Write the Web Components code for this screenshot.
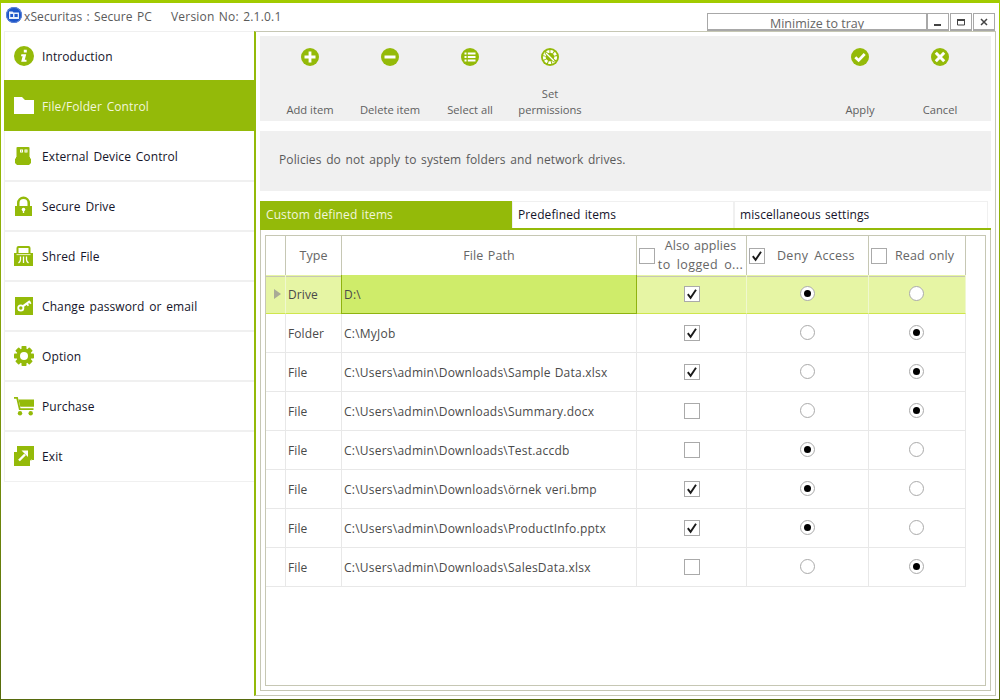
<!DOCTYPE html>
<html>
<head>
<meta charset="utf-8">
<title>xSecuritas</title>
<style>
  html, body { margin: 0; padding: 0; background: #fff; }
  body { font-family: "Open Sans", "Liberation Sans", sans-serif; font-size: 12px; }
</style>
</head>
<body>

<x-app>
  <x-titlebar slot="title" product="xSecuritas : Secure PC" version="Version No: 2.1.0.1"></x-titlebar>

  <x-nav slot="nav">
    <x-nav-item icon="info">Introduction</x-nav-item>
    <x-nav-item icon="folder" active>File/Folder Control</x-nav-item>
    <x-nav-item icon="usb">External Device Control</x-nav-item>
    <x-nav-item icon="lock">Secure Drive</x-nav-item>
    <x-nav-item icon="shred">Shred File</x-nav-item>
    <x-nav-item icon="key">Change password or email</x-nav-item>
    <x-nav-item icon="gear">Option</x-nav-item>
    <x-nav-item icon="cart">Purchase</x-nav-item>
    <x-nav-item icon="exit" last>Exit</x-nav-item>
  </x-nav>

  <x-toolbar slot="main">
    <x-tool-button icon="plus">Add item</x-tool-button>
    <x-tool-button icon="minus">Delete item</x-tool-button>
    <x-tool-button icon="list">Select all</x-tool-button>
    <x-tool-button icon="perm">Set<br>permissions</x-tool-button>
    <x-tool-button icon="check" slot="end">Apply</x-tool-button>
    <x-tool-button icon="cross" slot="end">Cancel</x-tool-button>
  </x-toolbar>

  <x-notice slot="main">Policies do not apply to system folders and network drives.</x-notice>

  <x-tabs slot="main">
    <x-tab slot="tabs" active style="width:252px">Custom defined items</x-tab>
    <x-tab slot="tabs" style="width:222px">Predefined items</x-tab>
    <x-tab slot="tabs" style="width:254px">miscellaneous settings</x-tab>
    <x-file-grid>
      <x-file-row type="Drive" path="D:\" applies mode="deny" selected></x-file-row>
      <x-file-row type="Folder" path="C:\MyJob" applies mode="read"></x-file-row>
      <x-file-row type="File" path="C:\Users\admin\Downloads\Sample Data.xlsx" applies mode="read"></x-file-row>
      <x-file-row type="File" path="C:\Users\admin\Downloads\Summary.docx" mode="read"></x-file-row>
      <x-file-row type="File" path="C:\Users\admin\Downloads\Test.accdb" mode="deny"></x-file-row>
      <x-file-row type="File" path="C:\Users\admin\Downloads\örnek veri.bmp" applies mode="deny"></x-file-row>
      <x-file-row type="File" path="C:\Users\admin\Downloads\ProductInfo.pptx" applies mode="deny"></x-file-row>
      <x-file-row type="File" path="C:\Users\admin\Downloads\SalesData.xlsx" mode="read"></x-file-row>
    </x-file-grid>
  </x-tabs>
</x-app>

<script>
const GREEN = '#94ba09';

const gearTeeth = [0, 45, 90, 135, 180, 225, 270, 315]
  .map(a => `<rect x="7.500" y="0" width="5" height="5" rx="0.800" fill="currentColor" transform="rotate(${a} 10 10)"/>`)
  .join('');

// Sidebar icons, 20x20, drawn in currentColor
const NAV_ICONS = {
  info: `<circle cx="10" cy="10" r="10" fill="currentColor"/>
    <path d="M9.800 3.800h3v2.800h-3zM7.400 8.200h4.800l-1.400 5.600h1.700v2H7.200l1.400-5.600H7z" fill="#fff"/>`,
  folder: `<path d="M0 1h8l3 3h9v14H0z" fill="currentColor"/>`,
  usb: `<path d="M2.500 1.500L3.500 1h11l1 .5V11.500H2.500z" fill="currentColor"/>
    <path d="M1 12.500h16v4.500L15 19H3l-2-2z" fill="currentColor"/>
    <path d="M2 11h14v2H2z" fill="currentColor"/>
    <path d="M6 3.500h3v3H6zM10.500 3.500h3v3h-3z" fill="#fff"/>
    <path d="M7 4.500h1v1H7zM11.500 4.500h1v1h-1z" fill="${GREEN}"/>`,
  lock: `<path d="M3 10.500V7a6.500 6.500 0 0 1 13 0v3.500h-2.500V7a4 4 0 0 0-8 0v3.500z" fill="currentColor"/>
    <path d="M1 10h17v10H1z" fill="currentColor"/>
    <circle cx="9.500" cy="13.500" r="1.800" fill="#fff"/><path d="M8.800 14h1.400v3H8.800z" fill="#fff"/>`,
  shred: `<path d="M2.500 8V2A2 2 0 0 1 4.500 0h10a2 2 0 0 1 2 2V8h-2V2H4.500v6z" fill="currentColor"/>
    <path d="M0 7h19v13H0z" fill="currentColor"/>
    <path d="M2.500 8.600h14" stroke="#fff" stroke-width=".8"/>
    <path d="M6.500 10.500v3q0 2-2 3.500M9.500 10.500V17M12.500 10.500v3q0 2 2 3.500" stroke="#fff" stroke-width="1.300" fill="none"/>`,
  key: `<path d="M1 1h18v18H1z" fill="currentColor"/>
    <circle cx="6.800" cy="12" r="2.600" fill="none" stroke="#fff" stroke-width="1.800"/>
    <path d="M8.800 10.300L16 5.200" stroke="#fff" stroke-width="2.200" fill="none"/>
    <path d="M12.800 7.500l1.600 2.200M15.300 5.700l1.500 2" stroke="#fff" stroke-width="1.800" fill="none"/>`,
  gear: `${gearTeeth}<circle cx="10" cy="10" r="7.500" fill="currentColor"/><circle cx="10" cy="10" r="4" fill="#fff"/>`,
  cart: `<path d="M0 1h3.800l2.700 11.200h13v1.800H5L2.400 2.800H0z" fill="currentColor"/>
    <path d="M4.500 3.500H20v7.300H6.300z" fill="currentColor"/>
    <circle cx="6" cy="17.300" r="2.200" fill="currentColor"/><circle cx="16.700" cy="17.300" r="2.200" fill="currentColor"/>`,
  exit: `<path d="M3 0h17v14h-4v6H0V6h3z" fill="currentColor"/>
    <path d="M5 14.500l6-6" stroke="#fff" stroke-width="2.400" fill="none"/>
    <path d="M7.500 4.500h6.500V11z" fill="#fff"/>
    <path d="M16 14.500h1.500v-1" stroke="#dfe9b0" stroke-width="1" fill="none"/>`
};

// Round toolbar icons, 18x18
const TOOL_ICONS = {
  plus: `<path d="M9 3.500v11M3.500 9h11" stroke="#fff" stroke-width="2.800"/>`,
  minus: `<path d="M3.500 9h11" stroke="#fff" stroke-width="3"/>`,
  list: `<path d="M3.500 5.500h2M6.800 5.500h7.700M3.500 9h2M6.800 9h7.700M3.500 12.500h2M6.800 12.500h7.700" stroke="#fff" stroke-width="1.900"/>`,
  perm: `<circle cx="9" cy="9" r="5.700" fill="none" stroke="#fff" stroke-width="2.800" stroke-dasharray="2.800 1"/>
    <path d="M4.500 4.500l9 9" stroke="${GREEN}" stroke-width="2.600"/>
    <path d="M5 5l8 8" stroke="#fff" stroke-width="1.200"/>`,
  check: `<path d="M4.300 9.300l3.300 3.100 6.100-6.400" stroke="#fff" stroke-width="2.800" fill="none"/>`,
  cross: `<path d="M4.800 4.800l8.400 8.400M13.200 4.800l-8.400 8.400" stroke="#fff" stroke-width="3"/>`
};

const TICK = `<svg width="14" height="14" viewBox="0 0 14 14"><path d="M2.800 7.200l2.800 3.600L11 2.800" stroke="#1a1a1a" stroke-width="1.900" fill="none"/></svg>`;

class XApp extends HTMLElement {
  constructor() {
    super();
    this.attachShadow({ mode: 'open' });
    this.shadowRoot.innerHTML = `
      <style>
        :host {
          display: block;
          box-sizing: border-box;
          width: 1000px;
          height: 700px;
          padding: 3px 1px 1px;
          background: linear-gradient(#a2cb00 0%, #8aa80a 40%, #566a0c 100%);
        }
        .window {
          display: flex;
          flex-direction: column;
          height: 100%;
          background: #fff;
        }
        .body {
          flex: 1;
          display: flex;
          min-height: 0;
          padding: 0 3px 3px 3px;
        }
        .side { width: 250px; flex: none; }
        .main {
          flex: 1;
          box-sizing: border-box;
          display: flex;
          flex-direction: column;
          gap: 10px;
          padding: 4px;
          border-left: 2px solid ${GREEN};
          border-top: 1px solid #c6c7b4;
          border-right: 1px solid #c6c7b4;
          border-bottom: 1px solid #c6c7b4;
        }
      </style>
      <div class="window">
        <slot name="title"></slot>
        <div class="body">
          <div class="side"><slot name="nav"></slot></div>
          <div class="main"><slot name="main"></slot></div>
        </div>
      </div>
    `;
  }
}

class XTitlebar extends HTMLElement {
  constructor() {
    super();
    this.attachShadow({ mode: 'open' });
    this.shadowRoot.innerHTML = `
      <style>
        :host {
          display: flex;
          align-items: flex-start;
          height: 28px;
          color: #5a5a5a;
          font-size: 12px;
          overflow: hidden;
        }
        .logo { margin: 4px 2px 0 5px; flex: none; }
        .product { margin-top: 6px; line-height: 16px; width: 147px; flex: none; letter-spacing: .1px; word-spacing: 1px; }
        .version { margin-top: 6px; line-height: 16px; flex: 1; letter-spacing: .2px; word-spacing: 1px; }
        .ctrl {
          display: flex;
          margin: 10px 4px 0 0;
          gap: 1px;
        }
        .btn {
          box-sizing: border-box;
          height: 18px;
          border: 1px solid #a8a8a8;
          border-bottom-width: 2px;
          background: #fff;
          display: flex;
          align-items: center;
          justify-content: center;
          overflow: hidden;
        }
        .tray { width: 220px; margin-right: -1px; align-items: flex-start; padding-top: 2px; font-size: 12.500px; line-height: 16px; color: #666; }
        .sq { width: 22px; }
      </style>
      <svg class="logo" width="16" height="16" viewBox="0 0 16 16">
        <circle cx="8" cy="8" r="8" fill="#1c54c8"/>
        <circle cx="8" cy="8" r="7.500" fill="none" stroke="#5f86d8" stroke-width="1"/>
        <path d="M3 4.500h3.500l1 1H13V12H3z" fill="#e6edfb"/>
        <path d="M4.300 7h2.700v3H4.300zM8.500 7h3.200v3H8.500z" fill="#1c54c8"/>
      </svg>
      <span class="product">${this.getAttribute('product')}</span>
      <span class="version">${this.getAttribute('version')}</span>
      <div class="ctrl">
        <div class="btn tray">Minimize to tray</div>
        <div class="btn sq"><svg width="10" height="10" viewBox="0 0 10 10"><path d="M1 7h7v2H1z" fill="#444"/></svg></div>
        <div class="btn sq"><svg width="10" height="10" viewBox="0 0 10 10"><path d="M1.500 2.500h7v5.500h-7z" fill="none" stroke="#444"/><path d="M1 2h8v2H1z" fill="#444"/></svg></div>
        <div class="btn sq"><svg width="10" height="10" viewBox="0 0 10 10"><path d="M2 2l6 6M8 2l-6 6" stroke="#444" stroke-width="1.500"/></svg></div>
      </div>
    `;
  }
}

class XNav extends HTMLElement {
  constructor() {
    super();
    this.attachShadow({ mode: 'open' });
    this.shadowRoot.innerHTML = `
      <style>
        :host {
          display: block;
          box-sizing: border-box;
          border-top: 1px solid #f0f0f0;
        }
        .list { display: flex; flex-direction: column; border-left: 1px solid #f0f0f0; }
      </style>
      <div class="list"><slot></slot></div>
    `;
  }
}

class XNavItem extends HTMLElement {
  constructor() {
    super();
    this.attachShadow({ mode: 'open' });
    const icon = NAV_ICONS[this.getAttribute('icon')];
    this.shadowRoot.innerHTML = `
      <style>
        :host {
          display: flex;
          align-items: center;
          gap: 8px;
          box-sizing: border-box;
          height: 50px;
          padding: 0 0 0 9px;
          border-bottom: 2px solid #f0f0f0;
          color: #14142a;
          font-size: 12px;
          letter-spacing: .1px;
          word-spacing: 1.500px;
        }
        :host([last]) { border-bottom-width: 1px; padding-bottom: 1px; }
        :host([active]) {
          height: 51px;
          margin: -2px 0 1px -1px;
          padding: 2px 0 1px 10px;
          border-bottom: none;
          background: ${GREEN};
          color: #f2f6dc;
        }
        svg { flex: none; color: ${GREEN}; }
        :host([active]) svg { color: #fff; }
      </style>
      <svg width="20" height="20" viewBox="0 0 20 20">${icon}</svg>
      <span><slot></slot></span>
    `;
  }
}

class XToolbar extends HTMLElement {
  constructor() {
    super();
    this.attachShadow({ mode: 'open' });
    this.shadowRoot.innerHTML = `
      <style>
        :host {
          display: flex;
          justify-content: space-between;
          height: 85px;
          padding: 0 11px 0 10px;
          background: #f0f0f0;
        }
        .group { display: flex; }
      </style>
      <div class="group"><slot></slot></div>
      <div class="group"><slot name="end"></slot></div>
    `;
  }
}

class XToolButton extends HTMLElement {
  constructor() {
    super();
    this.attachShadow({ mode: 'open' });
    const icon = TOOL_ICONS[this.getAttribute('icon')];
    this.shadowRoot.innerHTML = `
      <style>
        :host {
          display: flex;
          flex-direction: column;
          align-items: center;
          box-sizing: border-box;
          width: 80px;
          height: 85px;
          padding: 12px 0 3px;
          color: #606060;
          font-size: 11.200px;
          line-height: 16px;
          text-align: center;
        }
        .label { margin-top: auto; }
        svg { flex: none; }
      </style>
      <svg width="18" height="18" viewBox="0 0 18 18"><circle cx="9" cy="9" r="9" fill="${GREEN}"/>${icon}</svg>
      <span class="label"><slot></slot></span>
    `;
  }
}

class XNotice extends HTMLElement {
  constructor() {
    super();
    this.attachShadow({ mode: 'open' });
    this.shadowRoot.innerHTML = `
      <style>
        :host {
          display: flex;
          align-items: center;
          box-sizing: border-box;
          height: 60px;
          padding: 0 0 4px 19px;
          background: #f0f0f0;
          color: #5a5a5a;
          font-size: 12px;
          letter-spacing: .1px;
          word-spacing: 1.400px;
        }
      </style>
      <slot></slot>
    `;
  }
}

class XTabs extends HTMLElement {
  constructor() {
    super();
    this.attachShadow({ mode: 'open' });
    this.shadowRoot.innerHTML = `
      <style>
        :host {
          display: flex;
          flex-direction: column;
          height: 490px;
        }
        .strip {
          display: flex;
          height: 29px;
          flex: none;
          border-bottom: 2px solid ${GREEN};
          box-sizing: border-box;
        }
        .panel {
          flex: 1;
          box-sizing: border-box;
          display: flex;
          padding: 5px 4px 4px;
          border: 1px solid #c6c7b4;
          border-top: none;
          min-height: 0;
        }
      </style>
      <div class="strip"><slot name="tabs"></slot></div>
      <div class="panel"><slot></slot></div>
    `;
  }
}

class XTab extends HTMLElement {
  constructor() {
    super();
    this.attachShadow({ mode: 'open' });
    this.shadowRoot.innerHTML = `
      <style>
        :host {
          display: flex;
          align-items: center;
          box-sizing: border-box;
          height: 27px;
          padding: 0 0 2px 5px;
          border: 1px solid #f0f0f0;
          border-bottom: none;
          color: #14142a;
          font-size: 12px;
          letter-spacing: .1px;
          word-spacing: 1px;
        }
        :host([active]) {
          height: 29px;
          padding-bottom: 2px;
          border: none;
          padding-left: 6px;
          background: ${GREEN};
          color: #f2f6dc;
        }
      </style>
      <slot></slot>
    `;
  }
}

const GRID_COLUMNS = '20px 56px 295px 110px 122px 97px';

class XFileGrid extends HTMLElement {
  constructor() {
    super();
    this.attachShadow({ mode: 'open' });
    this.shadowRoot.innerHTML = `
      <style>
        :host {
          display: block;
          flex: 1;
          box-sizing: border-box;
          border: 1px solid #c6c7b4;
          background: #fff;
        }
        .head {
          display: grid;
          grid-template-columns: ${GRID_COLUMNS};
          width: 700px;
          height: 39px;
          color: #666;
          font-size: 12.500px;
          letter-spacing: .1px;
          word-spacing: 1px;
        }
        .head > div {
          box-sizing: border-box;
          display: flex;
          align-items: center;
          justify-content: center;
          border-right: 1px solid #c6c7b4;
          border-bottom: 1px solid #c6c7b4;
        }
        .head span { margin-bottom: 2px; }
        .head > .box { justify-content: flex-start; padding-left: 2px; }
        .box b {
          flex: none;
          box-sizing: border-box;
          width: 16px;
          height: 16px;
          border: 1px solid #aaa;
          background: #fff;
          display: flex;
          align-items: center;
          justify-content: center;
        }
        .also span { flex: 1; text-align: center; line-height: 19px; white-space: nowrap; }
        .also em { font-style: normal; letter-spacing: .4px; word-spacing: 2.500px; }
        .deny span { margin-left: 12px; letter-spacing: .3px; word-spacing: 2.500px; }
        .ro span { margin-left: 8px; }
      </style>
      <div class="head">
        <div></div>
        <div><span>Type</span></div>
        <div><span>File Path</span></div>
        <div class="box also"><b></b><span>Also applies<br><em>to logged o...</em></span></div>
        <div class="box deny"><b>${TICK}</b><span>Deny Access</span></div>
        <div class="box ro"><b></b><span>Read only</span></div>
      </div>
      <slot></slot>
    `;
  }
}

class XFileRow extends HTMLElement {
  constructor() {
    super();
    this.attachShadow({ mode: 'open' });
    const applies = this.hasAttribute('applies');
    const mode = this.getAttribute('mode');
    const selected = this.hasAttribute('selected');
    this.shadowRoot.innerHTML = `
      <style>
        :host {
          display: grid;
          grid-template-columns: ${GRID_COLUMNS};
          width: 700px;
          height: 39px;
          color: #4a4a4a;
          font-size: 12px;
        }
        :host([selected]) { background: #e6f5a4; }
        .c {
          box-sizing: border-box;
          display: flex;
          align-items: center;
          border-right: 1px solid #e8e8e8;
          border-bottom: 1px solid #e8e8e8;
          white-space: nowrap;
          overflow: hidden;
        }
        :host([selected]) .c { border-bottom-color: #cfe64c; border-right-color: #f0f8cf; }
        .t { padding-left: 2px; letter-spacing: .1px; }
        .mid { justify-content: center; }
        .mid.rd { padding-bottom: 1px; }
        .mid.last { padding-right: 1px; }
        :host([selected]) .path {
          background: #cfec6a;
          border-left: 1px solid #8fb30f;
          border-right: 1px solid #8fb30f;
          border-bottom: 1px solid #8fb30f;
          margin-left: -1px;
          padding-left: 2px;
        }
        .path { padding-left: 2px; letter-spacing: .23px; word-spacing: .5px; }
        .arrow { width: 0; height: 0; border-left: 7px solid #a9ab96; border-top: 5px solid transparent; border-bottom: 5px solid transparent; margin-left: 8px; }
        .chk {
          box-sizing: border-box;
          width: 16px;
          height: 16px;
          border: 1px solid #aaa;
          background: #fff;
          display: flex;
          align-items: center;
          justify-content: center;
        }
        .radio {
          box-sizing: border-box;
          width: 15px;
          height: 15px;
          border: 1px solid #aaa;
          border-radius: 50%;
          background: #fff;
          display: flex;
          align-items: center;
          justify-content: center;
        }
        .radio i { width: 7px; height: 7px; border-radius: 50%; background: #000; }
      </style>
      <div class="c">${selected ? '<span class="arrow"></span>' : ''}</div>
      <div class="c t">${this.getAttribute('type')}</div>
      <div class="c path">${this.getAttribute('path')}</div>
      <div class="c mid"><span class="chk">${applies ? TICK : ''}</span></div>
      <div class="c mid rd"><span class="radio">${mode === 'deny' ? '<i></i>' : ''}</span></div>
      <div class="c mid rd last"><span class="radio">${mode === 'read' ? '<i></i>' : ''}</span></div>
    `;
  }
}

customElements.define('x-app', XApp);
customElements.define('x-titlebar', XTitlebar);
customElements.define('x-nav', XNav);
customElements.define('x-nav-item', XNavItem);
customElements.define('x-toolbar', XToolbar);
customElements.define('x-tool-button', XToolButton);
customElements.define('x-notice', XNotice);
customElements.define('x-tabs', XTabs);
customElements.define('x-tab', XTab);
customElements.define('x-file-grid', XFileGrid);
customElements.define('x-file-row', XFileRow);
</script>
</body>
</html>
